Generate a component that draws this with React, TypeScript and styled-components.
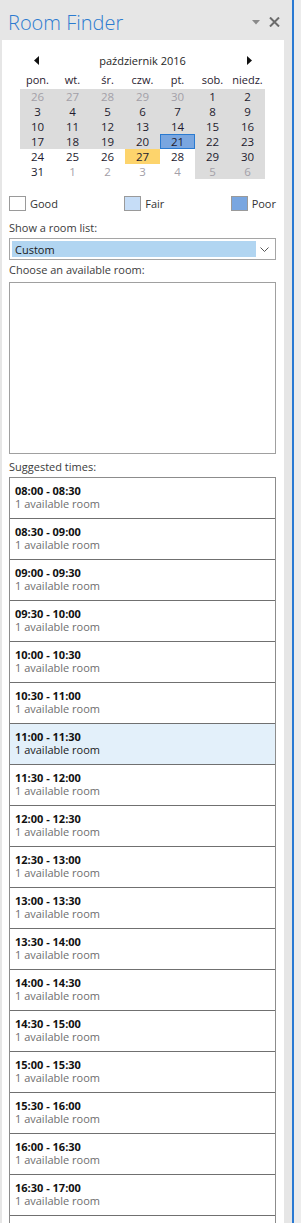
import styled, { createGlobalStyle, css } from 'styled-components';

const GlobalStyle = createGlobalStyle`
    html, body {
        margin: 0;
        padding: 0;
        background: #e6e6e6;
    }
    * {
        box-sizing: border-box;
    }
`

const Frame = styled.div`
    display: flex;
    width: 301px;
    height: 1223px;
    overflow: hidden;
    font-family: "Open Sans", "Noto Sans", Arial, sans-serif;
    font-size: 11px;
    color: #262626;
`

const Pane = styled.section`
    width: 292px;
    display: flex;
    flex-direction: column;
    background: #e6e6e6;
`

const Edge = styled.div`
    width: 2px;
    background: #2a7ad3;
`

const Gutter = styled.div`
    flex: 1;
    background: #ececec;
`

const Header = styled.header`
    flex-shrink: 0;
    height: 40px;
    display: flex;
    align-items: flex-end;
    justify-content: space-between;
    padding: 0 12px 4px 8px;
`

const Title = styled.h1`
    margin: 0;
    font-family: "Open Sans", "Noto Sans", sans-serif;
    font-weight: 300;
    font-size: 20px;
    line-height: 26px;
    color: #2c7bd0;
`

const HeaderTools = styled.div`
    display: flex;
    align-items: center;
    gap: 9px;
    padding-bottom: 9px;
`

const Content = styled.div`
    flex: 1;
    min-height: 0;
    overflow: hidden;
    margin-left: 2px;
    width: 282px;
    background: #ffffff;
    padding: 0 8px 0 7px;
    display: flex;
    flex-direction: column;
`

const Calendar = styled.div`
    flex-shrink: 0;
    width: 245px;
    margin: 10px auto 0;
    align-self: center;
`

const MonthRow = styled.div`
    height: 20px;
    display: flex;
    align-items: center;
    justify-content: space-between;
    padding: 0 13px;
    color: #262626;
`

const ArrowButton = styled.span`
    display: flex;
    width: 6px;
    justify-content: center;
`

const DayNames = styled.div`
    height: 19px;
    display: grid;
    grid-template-columns: repeat(7, 35px);
    align-items: center;
    text-align: center;
    color: #2a2230;
`

const Grid = styled.div`
    display: grid;
    grid-template-columns: repeat(7, 35px);
    grid-auto-rows: 15px;
`

const Cell = styled.div<{ $shade?: boolean; $other?: boolean; $selected?: boolean; $today?: boolean }>`
    display: flex;
    align-items: center;
    justify-content: center;
    font-size: 11.5px;
    line-height: 15px;
    color: ${p => (p.$other ? '#a3a0a8' : '#231b2e')};
    background: ${p => (p.$shade ? '#dcdcdc' : 'transparent')};
    ${p => p.$today && css`
        background: #fdd46c;
    `}
    ${p => p.$selected && css`
        background: #79a6e0;
        box-shadow: inset 0 0 0 1px #2a7ad0;
    `}
`

const Legend = styled.div`
    flex-shrink: 0;
    margin-top: 17px;
    height: 15px;
    display: flex;
    justify-content: space-between;
    align-items: center;
`

const LegendItem = styled.div`
    display: flex;
    align-items: center;
    gap: 4px;
    color: #333;
`

const Swatch = styled.span<{ $fill: string }>`
    width: 17px;
    height: 15px;
    border: 1px solid #9a9a9a;
    background: ${p => p.$fill};
`

const Label = styled.div<{ $top: number; $bottom: number }>`
    flex-shrink: 0;
    margin-top: ${p => p.$top}px;
    margin-bottom: ${p => p.$bottom}px;
    line-height: 16px;
    color: #3b3b3b;
`

const Select = styled.div`
    flex-shrink: 0;
    height: 22px;
    border: 1px solid #a5a5a5;
    padding: 2px;
    display: flex;
    align-items: stretch;
`

const SelectValue = styled.div`
    width: 244px;
    background: #b1d5f1;
    padding-left: 3px;
    display: flex;
    align-items: center;
    color: #1a1a1a;
`

const SelectChevron = styled.div`
    flex: 1;
    display: flex;
    align-items: center;
    justify-content: center;
`

const RoomBox = styled.div`
    flex-shrink: 0;
    height: 172px;
    border: 1px solid #a0a0a0;
`

const TimeList = styled.ul`
    flex: 1 0 auto;
    margin: 0;
    padding: 0;
    list-style: none;
    border: 1px solid #8c8c8c;
    border-bottom: none;
`

const TimeItem = styled.li<{ $active?: boolean }>`
    height: 41px;
    padding: 6px 5px 0;
    border-bottom: 1px solid #707070;
    background: ${p => (p.$active ? '#e3f0fa' : '#ffffff')};
    line-height: 13px;
`

const TimeRange = styled.div`
    font-weight: 700;
    color: #111;
`

const Availability = styled.div<{ $active?: boolean }>`
    color: ${p => (p.$active ? '#1a1a1a' : '#6e6e6e')};
`

const dayNames = ['pon.', 'wt.', 'śr.', 'czw.', 'pt.', 'sob.', 'niedz.']

type Day = { n: number; other?: boolean }

const weeks: Day[][] = [
    [{ n: 26, other: true }, { n: 27, other: true }, { n: 28, other: true }, { n: 29, other: true }, { n: 30, other: true }, { n: 1 }, { n: 2 }],
    [3, 4, 5, 6, 7, 8, 9].map(n => ({ n })),
    [10, 11, 12, 13, 14, 15, 16].map(n => ({ n })),
    [17, 18, 19, 20, 21, 22, 23].map(n => ({ n })),
    [24, 25, 26, 27, 28, 29, 30].map(n => ({ n })),
    [{ n: 31 }, ...[1, 2, 3, 4, 5, 6].map(n => ({ n, other: true }))],
]

const pad = (n: number) => String(n).padStart(2, '0')
const slotLabel = (i: number) => {
    const start = 8 * 60 + i * 30
    const end = start + 30
    return `${pad(Math.floor(start / 60))}:${pad(start % 60)} - ${pad(Math.floor(end / 60))}:${pad(end % 60)}`
}
const slots = Array.from({ length: 18 }, (_, i) => slotLabel(i))

const App = () => (
    <Frame>
        <GlobalStyle />
        <Pane>
            <Header>
                <Title>Room Finder</Title>
                <HeaderTools>
                    <svg width="8" height="5" viewBox="0 0 8 5">
                        <path d="M0 0 L8 0 L4 4.5 Z" fill="#8a8a8a" />
                    </svg>
                    <svg width="11" height="10" viewBox="0 0 11 10">
                        <path d="M1 0.5 L10 9.5 M10 0.5 L1 9.5" stroke="#6b6b6b" strokeWidth="2" />
                    </svg>
                </HeaderTools>
            </Header>
            <Content>
                <Calendar>
                    <MonthRow>
                        <ArrowButton>
                            <svg width="5" height="9" viewBox="0 0 5 9">
                                <path d="M5 0 L0 4.5 L5 9 Z" fill="#111" />
                            </svg>
                        </ArrowButton>
                        <span>październik 2016</span>
                        <ArrowButton>
                            <svg width="5" height="9" viewBox="0 0 5 9">
                                <path d="M0 0 L5 4.5 L0 9 Z" fill="#111" />
                            </svg>
                        </ArrowButton>
                    </MonthRow>
                    <DayNames>
                        {dayNames.map(d => <span key={d}>{d}</span>)}
                    </DayNames>
                    <Grid>
                        {weeks.map((week, r) =>
                            week.map((d, c) => (
                                <Cell
                                    key={`${r}-${c}`}
                                    $shade={r < 4 || c >= 5}
                                    $other={d.other}
                                    $selected={!d.other && d.n === 21}
                                    $today={!d.other && d.n === 27}
                                >
                                    {d.n}
                                </Cell>
                            ))
                        )}
                    </Grid>
                </Calendar>

                <Legend>
                    <LegendItem><Swatch $fill="#ffffff" />Good</LegendItem>
                    <LegendItem><Swatch $fill="#c6ddf7" />Fair</LegendItem>
                    <LegendItem><Swatch $fill="#79a6e0" />Poor</LegendItem>
                </Legend>

                <Label $top={9} $bottom={2}>Show a room list:</Label>
                <Select>
                    <SelectValue>Custom</SelectValue>
                    <SelectChevron>
                        <svg width="9" height="5" viewBox="0 0 9 5">
                            <path d="M0.5 0.5 L4.5 4.5 L8.5 0.5" fill="none" stroke="#555" strokeWidth="1" />
                        </svg>
                    </SelectChevron>
                </Select>

                <Label $top={2} $bottom={4}>Choose an available room:</Label>
                <RoomBox />

                <Label $top={5} $bottom={2}>Suggested times:</Label>
                <TimeList>
                    {slots.map((s, i) => (
                        <TimeItem key={s} $active={i === 6}>
                            <TimeRange>{s}</TimeRange>
                            <Availability $active={i === 6}>1 available room</Availability>
                        </TimeItem>
                    ))}
                </TimeList>
            </Content>
        </Pane>
        <Edge />
        <Gutter />
    </Frame>
)

export default App
